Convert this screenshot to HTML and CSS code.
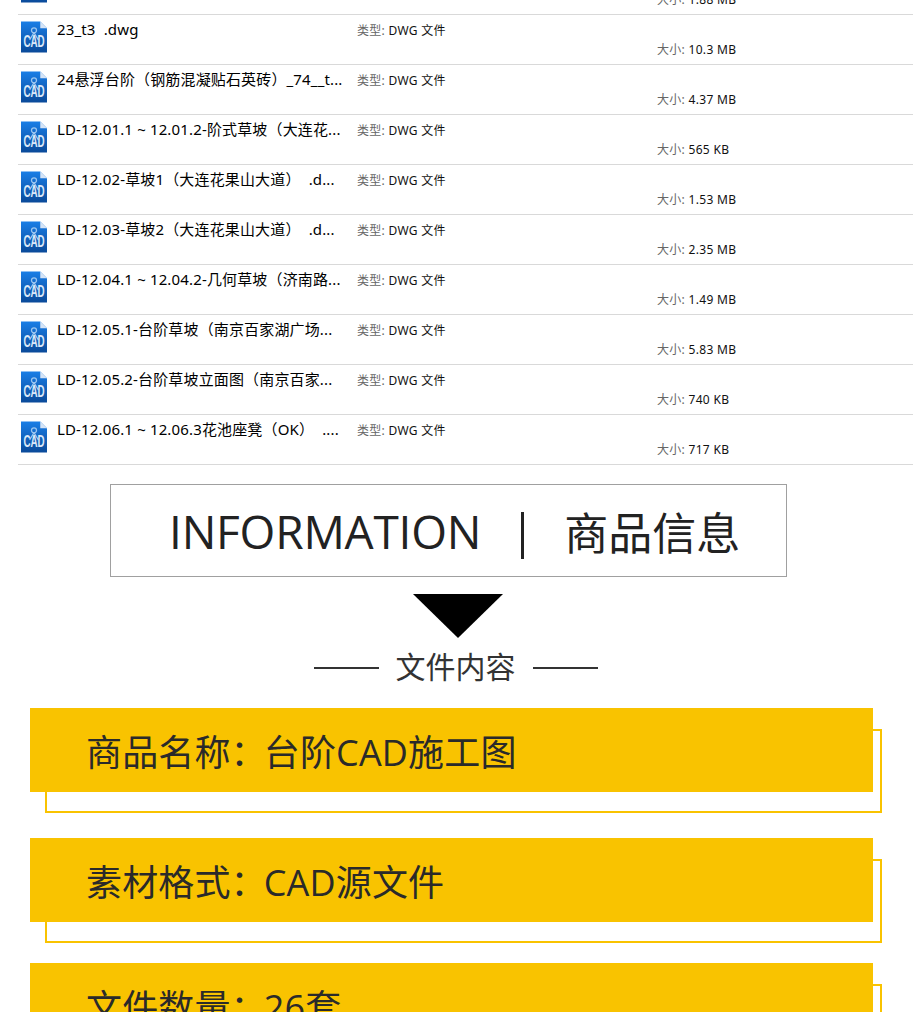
FILE: index.html
```html
<!DOCTYPE html>
<html lang="zh-CN">
<head>
<meta charset="utf-8">
<title>台阶CAD施工图</title>
<link rel="stylesheet" href="styles.css">
</head>
<body>
<svg class="defs" width="0" height="0" aria-hidden="true">
  <defs>
    <linearGradient id="cadfill" x1="0" y1="0" x2="0" y2="1">
      <stop offset="0" stop-color="#1a7ee6"/>
      <stop offset="1" stop-color="#0a4a9a"/>
    </linearGradient>
    <symbol id="cad" viewBox="0 0 27 32">
      <path d="M0 0H20L27 7V32H0Z" fill="url(#cadfill)"/>
      <path d="M20 0L27 7H20Z" fill="#d5e4f6"/>
      <circle cx="13.5" cy="9" r="2.6" fill="none" stroke="#9cc6f0" stroke-width="1.3"/>
      <path d="M13.5 11.5L9 19M13.5 11.5L18 19" fill="none" stroke="#9cc6f0" stroke-width="1.2"/>
      <text x="2.5" y="26.5" textLength="22" lengthAdjust="spacingAndGlyphs" class="cad-text">CAD</text>
    </symbol>
  </defs>
</svg>
<main class="page">
  <ul class="files">
    <li class="file"><svg class="icon"><use href="#cad"/></svg><span class="name">22_t3&nbsp; .dwg</span><span class="type"><i>类型:</i> DWG 文件</span><span class="size"><i>大小:</i> 1.88 MB</span></li>
    <li class="file"><svg class="icon"><use href="#cad"/></svg><span class="name">23_t3&nbsp; .dwg</span><span class="type"><i>类型:</i> DWG 文件</span><span class="size"><i>大小:</i> 10.3 MB</span></li>
    <li class="file"><svg class="icon"><use href="#cad"/></svg><span class="name">24悬浮台阶（钢筋混凝贴石英砖）_74__t...</span><span class="type"><i>类型:</i> DWG 文件</span><span class="size"><i>大小:</i> 4.37 MB</span></li>
    <li class="file"><svg class="icon"><use href="#cad"/></svg><span class="name">LD-12.01.1 ~ 12.01.2-阶式草坡（大连花...</span><span class="type"><i>类型:</i> DWG 文件</span><span class="size"><i>大小:</i> 565 KB</span></li>
    <li class="file"><svg class="icon"><use href="#cad"/></svg><span class="name">LD-12.02-草坡1（大连花果山大道）&nbsp; .d...</span><span class="type"><i>类型:</i> DWG 文件</span><span class="size"><i>大小:</i> 1.53 MB</span></li>
    <li class="file"><svg class="icon"><use href="#cad"/></svg><span class="name">LD-12.03-草坡2（大连花果山大道）&nbsp; .d...</span><span class="type"><i>类型:</i> DWG 文件</span><span class="size"><i>大小:</i> 2.35 MB</span></li>
    <li class="file"><svg class="icon"><use href="#cad"/></svg><span class="name">LD-12.04.1 ~ 12.04.2-几何草坡（济南路...</span><span class="type"><i>类型:</i> DWG 文件</span><span class="size"><i>大小:</i> 1.49 MB</span></li>
    <li class="file"><svg class="icon"><use href="#cad"/></svg><span class="name">LD-12.05.1-台阶草坡（南京百家湖广场...</span><span class="type"><i>类型:</i> DWG 文件</span><span class="size"><i>大小:</i> 5.83 MB</span></li>
    <li class="file"><svg class="icon"><use href="#cad"/></svg><span class="name">LD-12.05.2-台阶草坡立面图（南京百家...</span><span class="type"><i>类型:</i> DWG 文件</span><span class="size"><i>大小:</i> 740 KB</span></li>
    <li class="file"><svg class="icon"><use href="#cad"/></svg><span class="name">LD-12.06.1 ~ 12.06.3花池座凳（OK）&nbsp; ....</span><span class="type"><i>类型:</i> DWG 文件</span><span class="size"><i>大小:</i> 717 KB</span></li>
  </ul>

  <section class="banner">
    <span class="banner-en">INFORMATION</span>
    <span class="banner-bar"></span>
    <span class="banner-cn">商品信息</span>
  </section>
  <div class="arrow"></div>
  <h2 class="subtitle"><span class="rule"></span><span>文件内容</span><span class="rule"></span></h2>

  <section class="card">
    <div class="card-fill">商品名称<span class="colon">：</span>台阶CAD施工图</div>
  </section>
  <section class="card">
    <div class="card-fill">素材格式<span class="colon">：</span>CAD源文件</div>
  </section>
  <section class="card">
    <div class="card-fill">文件数量<span class="colon">：</span>26套</div>
  </section>
</main>
</body>
</html>
```
FILE: styles.css
```css
* { box-sizing: border-box; }
html, body { margin: 0; padding: 0; background: #fff; }
html { height: 1012px; overflow: hidden; }
body {
  width: 913px;
  height: 1012px;
  overflow: hidden;
  font-family: "Open Sans", "Noto Sans CJK SC", sans-serif;
  color: #111;
}
.defs { position: absolute; }
.cad-text {
  font-family: "Liberation Sans", sans-serif;
  font-size: 18px;
  font-weight: 700;
  fill: #dbe8f8;
}
.page { display: flex; flex-direction: column; }

.files {
  list-style: none;
  margin: -35px 0 0 18px;
  padding: 0;
}
.file {
  display: grid;
  grid-template-columns: 39px 300px 1fr;
  grid-template-rows: 30px 20px;
  height: 50px;
  border-bottom: 1px solid #d9d9d9;
  font-family: "Noto Sans", "Noto Sans CJK SC", sans-serif;
}
.icon {
  grid-row: 1 / 3;
  width: 26px;
  height: 32px;
  margin: 6px 0 0 3px;
}
.name { font-size: 15px; letter-spacing: .15px; line-height: 28px; white-space: pre; overflow: hidden; color: #000; }
.type { font-size: 12px; letter-spacing: .3px; line-height: 32px; }
.size { grid-column: 3; grid-row: 2; padding-left: 300px; font-size: 12px; letter-spacing: .3px; line-height: 10px; }
.type i, .size i { font-style: normal; color: #666; }

.banner {
  display: flex;
  align-items: center;
  width: 677px;
  height: 93px;
  margin: 19px 0 0 110px;
  padding-left: 58px;
  border: 1px solid #a0a0a0;
  color: #222;
}
.banner-en { font-size: 46px; letter-spacing: -.2px; line-height: 1; }
.banner-bar { width: 3px; height: 47px; margin: 10px 0 0 40px; background: #222; }
.banner-cn { margin-left: 40px; font-size: 44px; line-height: 1; font-family: "Noto Sans CJK SC", sans-serif; }

.arrow {
  width: 0;
  height: 0;
  margin: 17px 0 0 413px;
  border-style: solid;
  border-width: 44px 45px 0;
  border-color: #000 transparent transparent;
}

.subtitle {
  display: flex;
  align-items: center;
  justify-content: center;
  gap: 17px;
  height: 40px;
  margin: 7px 0 0;
  width: 911px;
  font-family: "Noto Sans CJK SC", sans-serif;
  font-size: 30px;
  font-weight: 400;
  color: #333;
}
.rule { width: 65px; height: 2px; margin-top: 6px; background: #333; }

.card {
  position: relative;
  width: 852px;
  height: 105px;
  margin: 23px 0 0 30px;
}
.card + .card { margin-top: 25px; }
.card + .card + .card { margin-top: 20px; }
.card::before {
  content: "";
  position: absolute;
  left: 15px;
  top: 21px;
  right: 0;
  bottom: 0;
  border: 2px solid #f9c300;
}
.card-fill {
  position: relative;
  width: 843px;
  height: 84px;
  padding-left: 56px;
  background: #f9c300;
  font-family: "Open Sans", "Noto Sans CJK SC", sans-serif;
  font-size: 36px;
  letter-spacing: .15px;
  line-height: 90px;
  color: #2a2a2a;
}
.colon { margin-right: -3px; }
```
